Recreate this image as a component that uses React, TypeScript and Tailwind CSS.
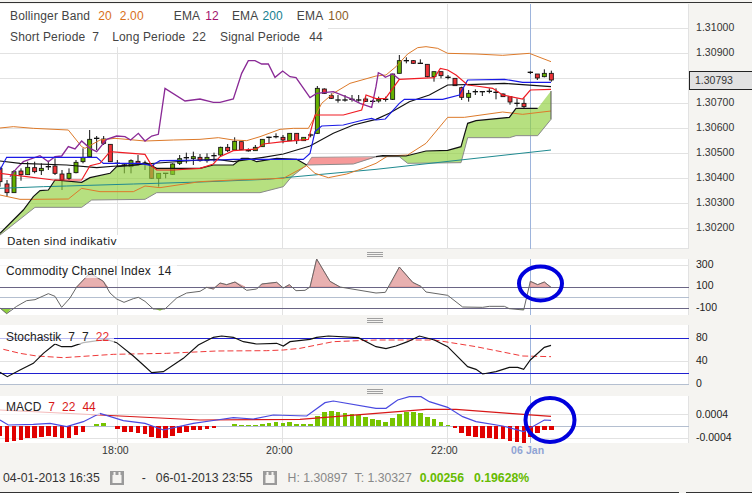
// All chart coordinates are in 3x units (reference pixels * 3), so strokes of 3 = 1px.
const PANEL_W = 2067;
const RIGHT = 1128;

const line = (left: string, right = "") =>
  (left + " " +
    right
      .trim()
      .split(/\s+/)
      .filter(Boolean)
      .map((p) => {
        const [x, y] = p.split(",");
        return `${Number(x) + RIGHT},${y}`;
      })
      .join(" ")).trim();

// x, bodyTop, bodyBottom, wickTop, wickBottom, type
type Candle = [number, number, number, number, number, "r" | "g" | "d"];

const candles: Candle[] = [
  [0, 505, 545, 500, 560, "r"], [21, 552, 578, 540, 590, "r"], [42, 515, 578, 510, 578, "g"],
  [63, 513, 524, 505, 542, "r"], [83, 502, 524, 485, 525, "g"], [104, 503, 515, 485, 520, "r"],
  [124, 505, 512, 490, 525, "g"], [145, 500, 500, 482, 510, "d"], [165, 498, 520, 475, 525, "r"],
  [186, 522, 540, 510, 570, "r"], [207, 520, 535, 505, 540, "g"], [228, 487, 518, 480, 520, "g"],
  [249, 473, 485, 445, 490, "g"], [269, 418, 470, 390, 470, "g"], [290, 415, 415, 408, 450, "d"],
  [311, 417, 430, 408, 435, "r"], [331, 433, 485, 433, 485, "r"], [352, 490, 490, 480, 498, "d"],
  [373, 495, 495, 490, 520, "d"], [393, 482, 500, 478, 520, "g"], [414, 484, 490, 465, 495, "r"],
  [435, 490, 490, 482, 510, "d"], [455, 497, 535, 495, 537, "r"], [476, 520, 535, 520, 560, "g"],
  [497, 520, 520, 520, 535, "d"], [518, 492, 523, 490, 525, "g"], [539, 476, 490, 465, 495, "g"],
  [559, 473, 473, 458, 490, "d"], [580, 470, 476, 455, 495, "g"], [600, 472, 482, 462, 485, "r"],
  [621, 472, 482, 460, 488, "g"], [642, 467, 467, 458, 485, "d"], [662, 442, 465, 440, 468, "g"],
  [683, 442, 452, 432, 456, "r"], [704, 424, 450, 412, 452, "g"], [724, 425, 449, 425, 450, "r"],
  [745, 452, 452, 445, 455, "d"], [766, 442, 452, 435, 452, "g"], [787, 418, 440, 418, 440, "g"],
  [807, 412, 412, 410, 430, "d"], [828, 410, 410, 400, 415, "d"], [849, 412, 420, 405, 430, "r"],
  [869, 400, 422, 400, 422, "g"], [890, 400, 422, 400, 432, "r"], [911, 412, 422, 412, 422, "g"],
  [932, 405, 405, 400, 412, "d"], [952, 265, 400, 258, 402, "g"], [973, 267, 280, 265, 282, "r"],
  [994, 287, 295, 280, 297, "r"], [1014, 300, 300, 285, 308, "d"], [1035, 300, 300, 285, 305, "d"],
  [1056, 298, 298, 285, 305, "d"], [1076, 300, 300, 285, 305, "d"], [1097, 297, 304, 290, 306, "r"],
  [1118, 304, 304, 300, 310, "d"],
  [1136, 298, 303, 290, 308, "g"], [1157, 298, 298, 290, 305, "d"], [1178, 222, 298, 222, 300, "g"],
  [1198, 182, 220, 165, 220, "g"], [1219, 182, 182, 172, 190, "d"], [1240, 182, 190, 180, 192, "r"],
  [1261, 190, 190, 178, 192, "d"], [1282, 193, 230, 193, 232, "r"], [1302, 215, 230, 215, 245, "g"],
  [1323, 215, 227, 215, 235, "r"], [1344, 232, 232, 225, 238, "d"], [1365, 235, 257, 235, 258, "r"],
  [1385, 263, 292, 260, 300, "r"], [1406, 280, 292, 270, 305, "g"], [1426, 275, 275, 268, 285, "d"],
  [1447, 275, 275, 275, 288, "d"], [1468, 274, 274, 265, 280, "d"], [1488, 277, 277, 265, 298, "d"],
  [1509, 282, 290, 280, 291, "r"], [1530, 290, 306, 288, 314, "r"], [1551, 310, 310, 295, 320, "d"],
  [1572, 310, 320, 295, 325, "r"], [1591, 217, 217, 214, 222, "d"], [1612, 222, 234, 222, 240, "r"],
  [1633, 220, 230, 208, 232, "g"], [1654, 220, 240, 212, 245, "r"],
];

// x, end of bar (zero line is y=528)
const macdBars: [number, number][] = [
  [0, 557], [21, 575], [42, 572], [63, 570], [83, 565], [104, 563], [124, 560], [145, 557], [165, 560],
  [186, 563], [207, 563], [228, 555], [249, 547], [290, 522], [311, 520], [352, 537], [373, 545],
  [393, 547], [414, 549], [435, 551], [455, 560], [476, 563], [497, 565], [518, 557], [539, 550],
  [559, 545], [580, 541], [600, 541], [621, 538], [642, 535], [704, 522], [724, 524], [745, 526],
  [766, 526], [787, 521], [807, 518], [828, 516], [849, 519], [869, 517], [890, 521], [911, 522],
  [932, 522], [952, 498], [973, 487], [994, 483], [1014, 485], [1035, 488], [1056, 491], [1076, 494],
  [1097, 502], [1118, 508], [1136, 510], [1157, 515], [1178, 505], [1198, 492], [1219, 485],
  [1240, 487], [1261, 488], [1282, 502], [1302, 508], [1323, 516], [1344, 524], [1365, 535],
  [1385, 550], [1406, 557], [1426, 560], [1447, 563], [1468, 565], [1488, 567], [1509, 568],
  [1530, 573], [1551, 575], [1572, 578], [1591, 560], [1612, 550], [1633, 541], [1654, 539],
];

const bollUp = line(
  "0,384 40,380 100,385 205,390 245,440 255,445 300,420 345,415 435,423 520,420 600,418 655,413 700,420 740,422 780,410 840,388 880,385 925,385 945,350 965,310 1000,280 1050,250 1128,228",
  "30,225 60,200 95,162 125,143 150,140 185,145 215,160 300,162 380,166 460,160 525,185",
);
const bollLow = line(
  "0,585 60,598 100,598 205,597 245,565 300,575 400,575 435,558 480,563 600,545 700,540 850,535 920,497 945,520 985,533 1040,522 1090,505 1128,490",
  "35,468 95,465 150,430 215,352 265,352 380,336 440,343 525,333",
);
const purple = line(
  "30,530 50,505 70,485 120,467 145,485 165,470 185,468 205,440 225,447 245,423 270,445 290,455 320,418 350,408 375,410 392,420 415,400 435,423 455,408 475,403 495,265 555,303 600,297 640,307 660,307 700,297 725,220 745,182 765,182 785,192 805,192 825,232 848,213 870,230 888,233 930,293 950,280 1000,275 1050,295 1080,310 1115,322 1128,260",
  "7,218 20,225 28,232 50,222 70,238",
);
const red = line(
  "0,520 40,525 80,530 160,540 245,540 270,497 300,490 330,455 435,463 455,497 470,510 520,510 600,505 640,492 660,470 700,452 770,447 790,432 850,425 925,418 945,345 1030,345 1085,330 1098,285 1128,296",
  "28,296 70,238 175,233 193,205 215,210 240,225 275,255 300,258 350,265 380,285 440,297 463,270 525,268",
);
const blue = line(
  "0,510 20,472 290,472 310,490 420,490 455,497 480,482 650,480 700,478 910,478 930,460 945,395 965,378 1030,375 1090,360 1115,355 1128,360",
  "28,357 70,310 85,298 200,298 250,285 275,240 385,238 440,247 525,247",
);
const black = line(
  "0,483 60,490 200,495 290,503 350,498 600,480 650,478 700,485 790,472 850,462 930,438 1000,400 1060,375 1128,358",
  "40,340 100,305 160,285 215,255 300,253 385,250 525,260",
);
const teal = line("0,565 130,560 200,558 400,552 600,546 800,538 1128,508", "525,450");

const cloudTopA =
  "0,700 40,660 70,630 100,590 120,572 145,570 165,540 245,547 270,533 330,520 350,500 415,495 435,488 470,505 520,505 600,505 640,495 700,495 725,475 745,475 770,485 830,475 890,478 920,495";
const cloudBottomA = "0,705 105,622 245,622 275,600 435,598 470,578 780,578 850,560 875,530 920,495";
const cloudTopB = line(
  "1128,470",
  "20,467 90,468 150,453 215,451 255,440 275,370 300,362 400,352 420,325 485,325",
);
const cloudBottomB = line("1128,470", "70,470 95,490 255,488 275,413 400,413 420,407 485,407 525,358");
const cloudFillB = line("", "525,273");

const cciLine = line(
  "0,175 20,192 50,170 80,153 105,150 145,132 165,140 185,173 210,145 230,112 270,70 310,95 330,130 350,148 372,158 400,147 415,143 435,155 460,178 495,178 530,145 560,130 600,125 620,113 640,118 660,100 680,105 705,97 740,122 770,118 785,103 830,98 850,115 868,105 888,123 915,122 930,112 950,28 990,95 1020,112 1128,130",
  "28,128 70,52 110,98 135,110 150,127 215,137 260,172 320,173 340,170 385,170 400,177 443,181 463,95 485,105 505,97 525,113",
);
const stochLine = line(
  "0,367 22,380 60,360 100,340 130,310 165,282 185,290 215,290 250,278 320,268 350,278 400,318 430,345 455,368 490,365 550,325 595,285 640,262 665,258 700,262 730,275 770,282 830,280 850,288 870,275 930,268 950,262 985,258 1075,263 1128,290",
  "30,296 60,288 95,275 130,258 175,270 215,290 275,350 300,358 320,372 360,365 400,352 425,352 443,358 463,330 505,292 525,286",
);
const stochSignal = line(
  "10,298 60,310 110,318 190,323 340,313 500,310 650,303 800,302 850,300 900,295 1000,275 1128,270",
  "175,270 300,290 440,318 525,320",
);
const macdLine = line(
  "0,510 25,525 100,523 150,520 200,530 250,515 300,490 370,512 435,520 490,540 580,520 650,510 700,503 760,507 820,495 920,498 975,458 1000,453 1128,475",
  "30,475 65,450 100,440 135,440 160,455 215,472 260,500 300,515 380,528 443,545 505,510 525,511",
);
const macdSignal = line("0,480 300,495 600,510 900,508 1128,490", "150,478 240,478 400,490 525,499");

function HLines({ ys, color = "#e2e2e2" }: { ys: number[]; color?: string }) {
  return (
    <>
      {ys.map((y) => (
        <line key={y} x1={0} x2={PANEL_W} y1={y} y2={y} stroke={color} strokeWidth={3} shapeRendering="crispEdges" />
      ))}
    </>
  );
}

function VLines({ y1, y2 }: { y1: number; y2: number }) {
  return (
    <>
      {[352, 848, RIGHT + 215, PANEL_W - 1].map((x) => (
        <line key={x} x1={x} x2={x} y1={y1} y2={y2} stroke="#e2e2e2" strokeWidth={3} shapeRendering="crispEdges" />
      ))}
      <line x1={RIGHT + 463} x2={RIGHT + 463} y1={y1} y2={y2} stroke="#9db4dc" strokeWidth={3} shapeRendering="crispEdges" />
    </>
  );
}

function Handle() {
  return (
    <div className="flex h-[10px] items-center justify-center">
      <div className="ml-[-2px] h-[5px] w-[16px] border-y border-[#a0a0a0] bg-[linear-gradient(#a0a0a0,#a0a0a0)] bg-[length:100%_1px] bg-center bg-no-repeat" />
    </div>
  );
}

function CalendarIcon() {
  return (
    <svg width="14" height="14" viewBox="0 0 14 14" className="shrink-0">
      <rect width="14" height="14" fill="#9a9a9a" />
      <rect x="2.5" y="4" width="9" height="8" fill="#f5f4f1" />
      <rect x="3.5" y="1" width="2" height="3.5" fill="#f5f4f1" />
      <rect x="8.5" y="1" width="2" height="3.5" fill="#f5f4f1" />
    </svg>
  );
}

export default function App() {
  return (
    <div className="relative h-[493px] w-[752px] overflow-hidden bg-[#f5f4f1] font-['Liberation_Sans',Arial,sans-serif] text-[#333]">
      <div className="mt-[2px] h-[1px] bg-[#333]" />
      <div className="h-[1px]" />

      {/* main price chart */}
      <div className="flex h-[245px]">
        <div className="relative h-full w-[689px] bg-white">
          <svg viewBox="0 12 2067 735" width="689" height="245" className="block">
            <HLines ys={[85, 160, 235, 310, 385, 460, 535, 610, 685, 746]} />
            <VLines y1={12} y2={747} />
            {candles.map(([x, top, bottom, wt, wb, t]) => (
              <g key={x}>
                <line x1={x} x2={x} y1={wt} y2={wb} stroke="#111" strokeWidth={3} />
                {t === "d" ? (
                  <line x1={x - 8} x2={x + 8} y1={top} y2={top} stroke="#111" strokeWidth={4} />
                ) : (
                  <rect
                    x={x - 6}
                    y={top}
                    width={12}
                    height={bottom - top}
                    fill={t === "r" ? "#ee3338" : "#66b000"}
                    stroke="#111"
                    strokeWidth={2.5}
                  />
                )}
              </g>
            ))}
            <polygon points={`${cloudTopA} ${cloudBottomA.split(" ").reverse().join(" ")}`} fill="#8fd03c" fillOpacity={0.65} />
            <polygon points={`${cloudTopB} ${cloudFillB} ${cloudBottomB.split(" ").reverse().join(" ")}`} fill="#8fd03c" fillOpacity={0.65} />
            <polygon points="920,495 935,472 1128,472 1060,492" fill="#f58e8e" fillOpacity={0.9} />
            <polyline points={cloudBottomA} fill="none" stroke="#8a8a8a" strokeWidth={3} />
            <polyline points={cloudBottomB} fill="none" stroke="#8a8a8a" strokeWidth={3} />
            <polyline points="920,495 1060,492 1128,470" fill="none" stroke="#8a8a8a" strokeWidth={3} />
            <polyline points="920,495 935,472 1128,470" fill="none" stroke="#777" strokeWidth={2} />
            <polyline points={teal} fill="none" stroke="#1f8a90" strokeWidth={3} />
            <polyline points={bollUp} fill="none" stroke="#dd7a2a" strokeWidth={3} />
            <polyline points={bollLow} fill="none" stroke="#dd7a2a" strokeWidth={3} />
            <polyline points={purple} fill="none" stroke="#8a2a96" strokeWidth={4} />
            <polyline points={black} fill="none" stroke="#111" strokeWidth={3.5} />
            <polyline points={cloudTopA} fill="none" stroke="#111" strokeWidth={3.5} />
            <polyline points={cloudTopB} fill="none" stroke="#111" strokeWidth={3.5} />
            <line x1={RIGHT + 525} x2={RIGHT + 525} y1={273} y2={358} stroke="#555" strokeWidth={3} />
            <polyline points={blue} fill="none" stroke="#1a1ae6" strokeWidth={3.5} />
            <polyline points={red} fill="none" stroke="#f01c24" strokeWidth={3.5} />
          </svg>

          {/* legend over the chart */}
          <div className="absolute left-0 top-0 whitespace-nowrap text-[12px] tracking-[0.15px] text-[#444]">
            <div className="flex h-[24px] w-[348px] items-center bg-white pl-[10px]">
              <span>Bollinger Band</span>
              <span className="ml-[8px] text-[#d8701a]">20</span>
              <span className="ml-[8px] text-[#d8701a]">2.00</span>
              <span className="ml-[30px]">EMA</span>
              <span className="ml-[5px] text-[#a3126e]">12</span>
              <span className="ml-[13px]">EMA</span>
              <span className="ml-[4px] text-[#16808f]">200</span>
              <span className="ml-[14px]">EMA</span>
              <span className="ml-[5px] text-[#8a5c1e]">100</span>
            </div>
            <div className="flex h-[19px] w-[328px] items-center bg-white pb-[2px] pl-[10px]">
              <span>Short Periode</span>
              <span className="ml-[7px]">7</span>
              <span className="ml-[13px]">Long Periode</span>
              <span className="ml-[7px]">22</span>
              <span className="ml-[14px]">Signal Periode</span>
              <span className="ml-[9px]">44</span>
            </div>
          </div>
          <div className="absolute bottom-[1px] left-[7px] bg-white pr-[1px] font-['DejaVu_Sans',sans-serif] text-[11px] leading-[13px] text-[#222]">
            Daten sind indikativ
          </div>
        </div>
        <div className="relative flex-1 pl-[7px] pt-[11.5px] text-[10.5px] text-[#333]">
          {["1.31000", "1.30900", "", "1.30700", "1.30600", "1.30500", "1.30400", "1.30300", "1.30200"].map((v, i) => (
            <div key={i} className="flex h-[25px] items-center tracking-[0.05px]">
              {v}
            </div>
          ))}
          <div className="absolute left-0 top-[67px] flex h-[19px] w-full items-center border-y border-l border-[#222] bg-[#e2e2e2] pl-[5px]">
            1.30793
          </div>
        </div>
      </div>

      <Handle />

      {/* CCI */}
      <div className="flex h-[56px]">
        <div className="relative h-full w-[689px] bg-white">
          <svg viewBox="0 28 2067 168" width="689" height="56" className="block">
            <HLines ys={[48]} />
            <VLines y1={28} y2={196} />
            <polygon points="230,112 270,70 310,95 323,112" fill="#e8b0b0" stroke="#d08080" strokeWidth={2} />
            <polygon points="620,113 640,118 660,100 680,105 705,97 735,112" fill="#e8b0b0" stroke="#d08080" strokeWidth={2} />
            <polygon points="780,112 785,103 830,98 845,112" fill="#e8b0b0" stroke="#d08080" strokeWidth={2} />
            <polygon points="855,112 868,105 875,112" fill="#e8b0b0" stroke="#d08080" strokeWidth={2} />
            <polygon points="930,112 950,28 990,95 1020,112" fill="#e8b0b0" stroke="#d08080" strokeWidth={2} />
            <polygon points="1168,112 1198,52 1238,98 1263,112" fill="#e8b0b0" stroke="#d08080" strokeWidth={2} />
            <polygon points="1590,112 1591,95 1613,105 1633,97 1653,113" fill="#e8b0b0" stroke="#d08080" strokeWidth={2} />
            <polygon points="0,175 20,192 36,175" fill="#8fd03c" />
            <polygon points="460,176 480,183 495,176" fill="#8fd03c" />
            <polygon points="1528,176 1571,181 1572,176" fill="#8fd03c" />
            <HLines ys={[112, 175]} color="#6a6585" />
            <HLines ys={[142]} color="#b4bfd0" />
            <polyline points={cciLine} fill="none" stroke="#666" strokeWidth={3} />
          </svg>
          <div className="absolute left-0 top-0 flex h-[19px] w-[177px] items-center gap-[7px] whitespace-nowrap bg-white/70 pl-[6px] pt-[4px] text-[12px] tracking-[0.15px] text-[#222]">
            <span>Commodity Channel Index</span>
            <span>14</span>
          </div>
        </div>
        <div className="-mt-[5px] flex-1 pl-[7px] text-[10.5px] text-[#222]">
          {["300", "100", "-100"].map((v) => (
            <div key={v} className="flex h-[21.5px] items-center">
              {v}
            </div>
          ))}
        </div>
      </div>

      <Handle />

      {/* Stochastik */}
      <div className="flex h-[60px]">
        <div className="relative h-full w-[689px] bg-white">
          <svg viewBox="0 225 2067 180" width="689" height="60" className="block">
            <HLines ys={[335]} />
            <VLines y1={225} y2={405} />
            <HLines ys={[403]} color="#b4bfd0" />
            <HLines ys={[265, 370]} color="#2020d0" />
            <polyline points={stochSignal} fill="none" stroke="#ef3a3a" strokeWidth={3} strokeDasharray="18 9" />
            <polyline points={stochLine} fill="none" stroke="#111" strokeWidth={3.5} />
          </svg>
          <div className="absolute left-0 top-0 flex h-[19px] w-[114px] items-center whitespace-nowrap bg-white/70 pl-[6px] pt-[4px] text-[12px] text-[#222]">
            <span>Stochastik</span>
            <span className="ml-[7px]">7</span>
            <span className="ml-[7px]">7</span>
            <span className="ml-[7px] text-[#e83030]">22</span>
          </div>
        </div>
        <div className="flex-1 pl-[7px] pt-[1.5px] text-[10.5px] text-[#222]">
          {["80", "40", "0"].map((v) => (
            <div key={v} className="flex h-[23px] items-center">
              {v}
            </div>
          ))}
        </div>
      </div>

      <div className="h-[1px]" />
      <Handle />

      {/* MACD */}
      <div className="flex h-[47px]">
        <div className="relative h-full w-[689px] bg-white">
          <svg viewBox="0 438 2067 141" width="689" height="47" className="block">
            <HLines ys={[493, 565]} />
            <VLines y1={438} y2={579} />
            <HLines ys={[528]} color="#b4bfd0" />
            {macdBars.map(([x, end]) => (
              <rect
                key={x}
                x={x - 7}
                y={Math.min(end, 528)}
                width={14}
                height={Math.abs(end - 528)}
                fill={end > 528 ? "#e00000" : "#77c400"}
                shapeRendering="crispEdges"
              />
            ))}
            <polyline points={macdSignal} fill="none" stroke="#d81818" strokeWidth={3.5} />
            <polyline points={macdLine} fill="none" stroke="#4a4ae0" strokeWidth={3.5} />
          </svg>
          <div className="absolute left-0 top-0 flex h-[19px] w-[100px] items-center whitespace-nowrap bg-white/70 pl-[6px] pt-[3px] text-[12px] text-[#222]">
            <span>MACD</span>
            <span className="ml-[7px] text-[#d81818]">7</span>
            <span className="ml-[7px] text-[#d81818]">22</span>
            <span className="ml-[7px] text-[#d81818]">44</span>
          </div>
        </div>
        <div className="flex-1 pl-[7px] pt-[7px] text-[10.5px] text-[#222]">
          {["0.0004", "-0.0004"].map((v) => (
            <div key={v} className="flex h-[23px] items-center">
              {v}
            </div>
          ))}
        </div>
      </div>

      {/* time axis */}
      <div className="flex h-[14px] items-center pl-[102px] pt-[1px] text-[10.5px] tracking-[0.1px] text-[#333]">
        <span className="w-[164px]">18:00</span>
        <span className="w-[165px]">20:00</span>
        <span className="w-[80px]">22:00</span>
        <span className="font-bold text-[#8fa3d4]">06 Jan</span>
      </div>

      {/* footer */}
      <div className="flex h-[36px] items-center pl-[3px] pt-[6px] text-[12.25px] text-[#333]">
        <span>04-01-2013 16:35</span>
        <span className="ml-[10px]"><CalendarIcon /></span>
        <span className="ml-[18px]">-</span>
        <span className="ml-[10px]">06-01-2013 23:55</span>
        <span className="ml-[10px]"><CalendarIcon /></span>
        <span className="ml-[11px] text-[#888]">H: 1.30897</span>
        <span className="ml-[7px] text-[#888]">T: 1.30327</span>
        <span className="ml-[8px] font-bold text-[#66bb00]">0.00256</span>
        <span className="ml-[10px] font-bold text-[#66bb00]">0.19628%</span>
      </div>

      {/* bottom rule */}
      <div className="absolute bottom-0 left-0 flex h-[1px] w-full gap-[7px]">
        <div className="h-full w-[679px] bg-[#333]" />
        <div className="h-full flex-1 bg-[#333]" />
      </div>

      {/* hand-drawn circles over the panels */}
      <svg viewBox="0 0 752 493" width="752" height="493" className="pointer-events-none absolute left-0 top-0">
        <ellipse cx="540.5" cy="283.5" rx="21.5" ry="17" fill="none" stroke="#0000dc" strokeWidth="4" />
        <ellipse cx="550" cy="420" rx="24.5" ry="22" fill="none" stroke="#0000dc" strokeWidth="4" />
      </svg>
    </div>
  );
}
